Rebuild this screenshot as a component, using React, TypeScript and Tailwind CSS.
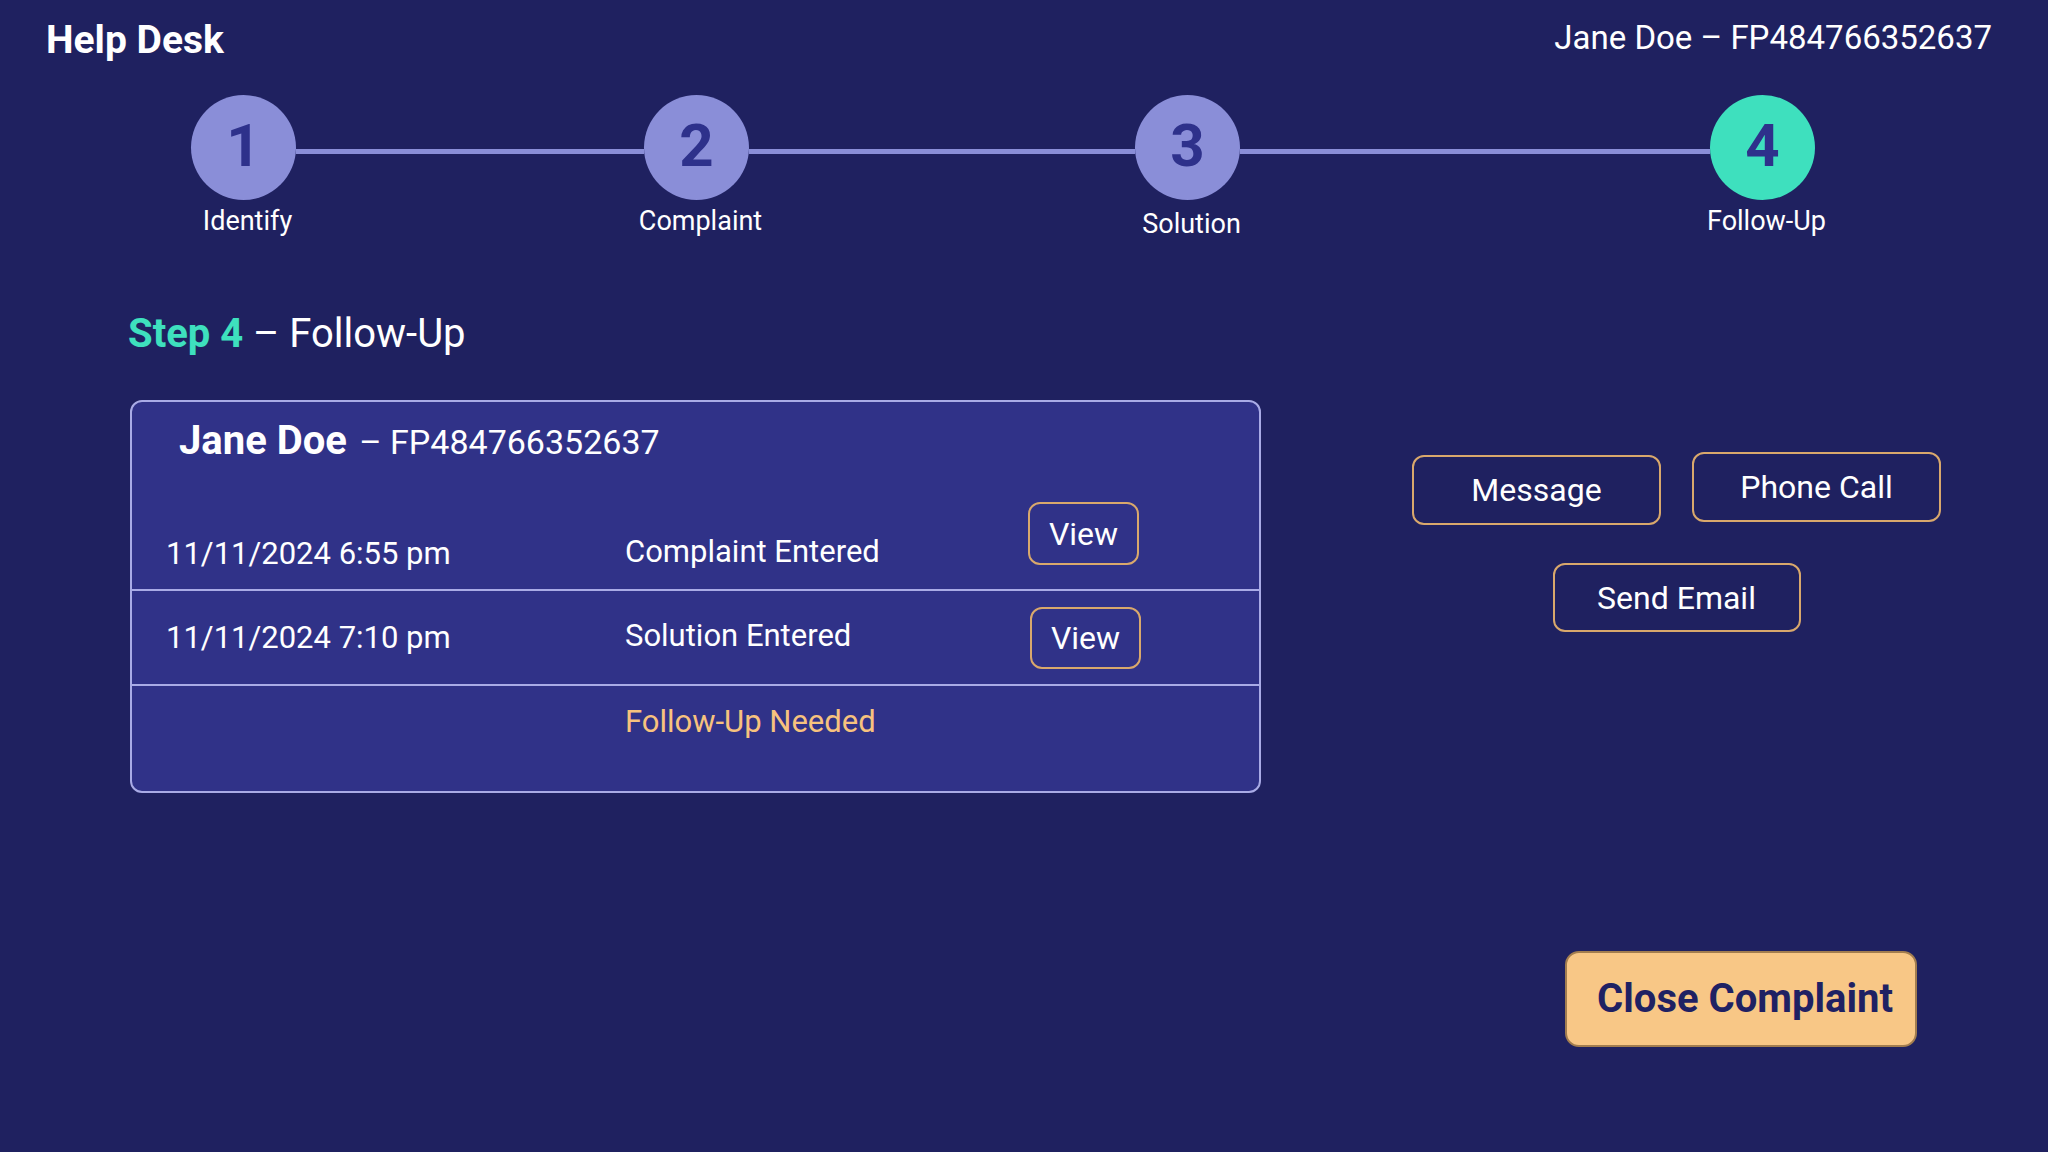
import React from "react";

const steps = [
  { n: "1", label: "Identify", active: false, labelMt: "mt-[8px]" },
  { n: "2", label: "Complaint", active: false, labelMt: "mt-[8px]" },
  { n: "3", label: "Solution", active: false, labelMt: "mt-[11px]" },
  { n: "4", label: "Follow-Up", active: true, labelMt: "mt-[8px]" },
];

const lineWidths = ["w-[348px]", "w-[386px]", "w-[470px]"];

function StepCircle({ n, label, active, labelMt }: { n: string; label: string; active: boolean; labelMt: string }) {
  return (
    <div className="flex w-[105px] shrink-0 flex-col items-center">
      <div
        className={
          "flex h-[105px] w-[105px] items-center justify-center rounded-full pb-[3px] text-[60px] font-bold leading-none text-[#2e318b] " +
          (active ? "bg-[#3ee0be]" : "bg-[#8a8ed8]")
        }
      >
        {n}
      </div>
      <div className={"whitespace-nowrap pl-[8px] text-[27px] leading-none text-white " + labelMt}>{label}</div>
    </div>
  );
}

function OutlineButton({ children, className }: { children: React.ReactNode; className: string }) {
  return (
    <button
      className={
        "flex items-center justify-center rounded-[12px] border-2 border-[#d9a86c] bg-transparent text-[32px] leading-none text-white " +
        className
      }
    >
      {children}
    </button>
  );
}

export default function App() {
  return (
    <div className="h-[1152px] w-full overflow-hidden bg-[#1f2160] font-['Roboto',_'Liberation_Sans',_sans-serif] text-white">
      {/* Header */}
      <header className="flex h-[60px] items-start justify-between pl-[46px] pr-[56px] pt-[20px]">
        <h1 className="pt-[1px] text-[39px] font-bold leading-none">Help Desk</h1>
        <div className="pt-[1px] text-[33px] leading-none">Jane Doe – FP484766352637</div>
      </header>

      {/* Stepper */}
      <div className="mt-[35px] flex items-start pl-[191px]">
        {steps.map((s, i) => (
          <React.Fragment key={s.n}>
            <StepCircle {...s} />
            {i < lineWidths.length && (
              <div className={"mt-[54px] h-[5px] shrink-0 bg-[#8a8ed8] " + lineWidths[i]} />
            )}
          </React.Fragment>
        ))}
      </div>

      {/* Step heading */}
      <h2 className="ml-[128px] mt-[76px] text-[40px] leading-none">
        <span className="font-bold text-[#3ee0be]">Step 4</span>
        <span> – Follow-Up</span>
      </h2>

      {/* Main */}
      <div className="mt-[46px] flex items-start">
        <div className="ml-[130px] flex h-[393px] w-[1131px] shrink-0 flex-col rounded-[12px] border-2 border-[#a9abe6] bg-[#303288]">
          <div className="pl-[47px] pt-[19px] leading-none">
            <span className="text-[40px] font-bold">Jane Doe</span>
            <span className="ml-[4px] text-[34px]"> – FP484766352637</span>
          </div>

          <div className="flex h-[130px] items-end border-b-2 border-[#a9abe6] pb-[20px] pl-[34px]">
            <div className="w-[459px] shrink-0 text-[31px] leading-none">11/11/2024 6:55 pm</div>
            <div className="mb-[2px] w-[403px] shrink-0 text-[31px] leading-none">Complaint Entered</div>
            <OutlineButton className="mb-[4px] h-[63px] w-[111px]">View</OutlineButton>
          </div>

          <div className="flex h-[95px] items-center border-b-2 border-[#a9abe6] pl-[34px]">
            <div className="w-[459px] shrink-0 text-[31px] leading-none">11/11/2024 7:10 pm</div>
            <div className="mb-[4px] w-[405px] shrink-0 text-[31px] leading-none">Solution Entered</div>
            <OutlineButton className="h-[62px] w-[111px]">View</OutlineButton>
          </div>

          <div className="flex-1 pl-[493px] pt-[20px]">
            <div className="text-[31px] leading-none text-[#f7c27e]">Follow-Up Needed</div>
          </div>
        </div>

        <div className="ml-[151px] mt-[52px] flex flex-col items-center">
          <div className="flex items-start gap-[31px]">
            <OutlineButton className="mt-[3px] h-[70px] w-[249px]">Message</OutlineButton>
            <OutlineButton className="h-[70px] w-[249px]">Phone Call</OutlineButton>
          </div>
          <OutlineButton className="mt-[38px] h-[69px] w-[248px]">Send Email</OutlineButton>
        </div>
      </div>

      {/* Footer */}
      <div className="mt-[158px] flex justify-end pr-[131px]">
        <button className="flex h-[96px] w-[352px] items-center justify-center rounded-[14px] border-2 border-[#a27d4f] bg-[#f8c786] pl-[8px] text-[40px] font-bold leading-none text-[#1f2163]">
          Close Complaint
        </button>
      </div>
    </div>
  );
}
